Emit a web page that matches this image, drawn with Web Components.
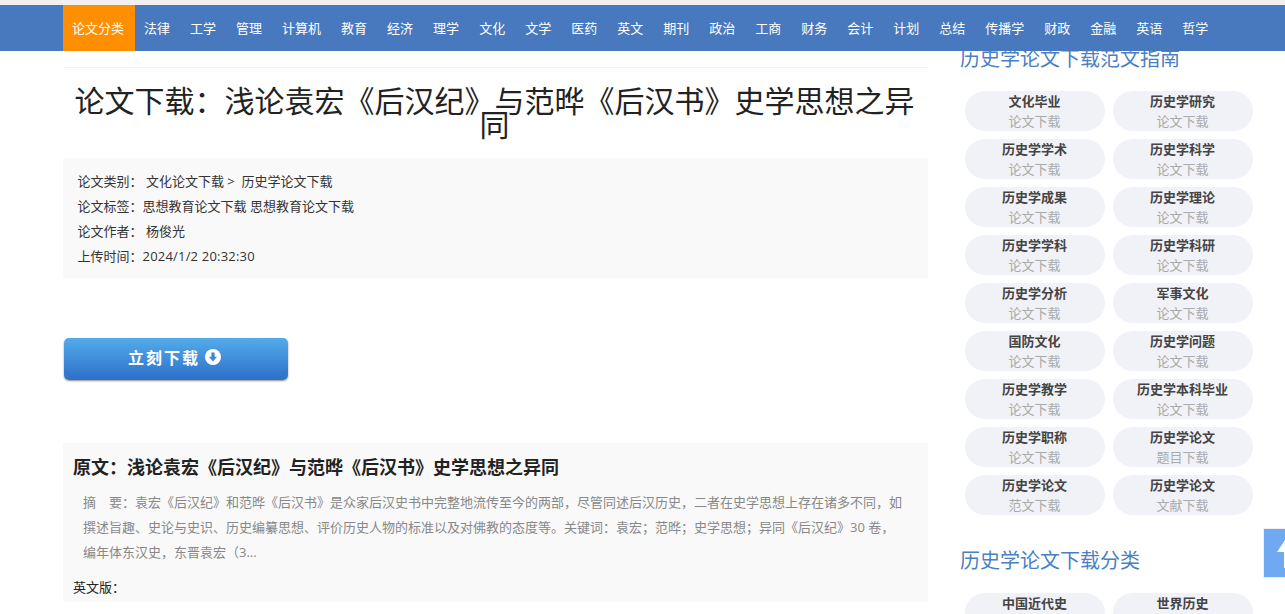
<!doctype html>
<html lang="zh">
<head>
<meta charset="utf-8">
<title>论文下载</title>
<style>
  html, body { margin: 0; padding: 0; overflow: hidden; height: 614px; background: #fff; }
  body { font-family: "Open Sans", "Noto Sans CJK SC", sans-serif; }
</style>
</head>
<body>

<template id="top-nav">
  <style>
    :host { display: block; position: fixed; top: 0; left: 0; right: 0; z-index: 5; border-top: 5px solid #f0f0f0; background: #4879be; }
    .bar { display: flex; height: 46px; padding-left: 63px; }
    a { display: block; padding: 0 11px 0 9px; font-size: 13px; line-height: 46px; color: #fff; white-space: nowrap; }
    a.on { background: #ff8f00; }
  </style>
  <div class="bar"></div>
</template>

<template id="paper-head">
  <style>
    :host { display: block; border-top: 1px solid #f3f3f3; }
    h1 { margin: 0; padding: 21px 2px 0 0; font-size: 30px; line-height: 24px; font-weight: 400; color: #222; text-align: center; }
  </style>
  <h1><slot></slot></h1>
</template>

<template id="info-box">
  <style>
    :host { display: block; margin-top: 21px; padding: 11px 15px 9px 14.5px; background: #f9f9f9; font-size: 13px; line-height: 25px; color: #333; }
  </style>
  <slot></slot>
</template>

<template id="download-button">
  <style>
    :host { display: block; width: 224px; height: 42px; margin: 60px 0 0 1px; border-radius: 5px; background: linear-gradient(#54abea, #2c70ca); box-shadow: 0 1px 2px rgba(0,0,0,.45); color: #fff; }
    .in { display: flex; align-items: center; justify-content: center; gap: 5px; height: 38px; padding-right: 3px; font-size: 16px; font-weight: 700; letter-spacing: 2px; }
    svg { width: 16px; height: 16px; display: block; }
  </style>
  <div class="in">
    <span><slot></slot></span>
    <svg viewBox="0 0 16 16"><circle cx="8" cy="8" r="8" fill="#fff"/><path d="M6.4 3.6h3.2v4.2h2.5L8 12.4 3.9 7.8h2.5z" fill="#3a86d8"/></svg>
  </div>
</template>

<template id="source-box">
  <style>
    :host { display: block; margin-top: 63px; padding: 12px 10px 2px; background: #f9f9f9; }
    h2 { margin: 0; font-size: 18px; line-height: 25px; font-weight: 700; color: #222; }
    .abs { margin: 10px 0 0; padding-left: 10px; font-size: 13px; line-height: 25px; color: #888; }
    .en { margin-top: 10px; font-size: 13px; line-height: 25px; color: #222; }
  </style>
  <h2><slot name="title"></slot></h2>
  <div class="abs"><slot name="abs"></slot></div>
  <div class="en"><slot name="en"></slot></div>
</template>

<template id="side-title">
  <style>
    :host { display: block; font-size: 20px; line-height: 30px; color: #4a7fc4; }
  </style>
  <slot></slot>
</template>

<template id="pill-grid">
  <style>
    :host { display: grid; grid-template-columns: 140px 140px; gap: 8px; padding-left: 5px; margin-top: 17px; }
  </style>
  <slot></slot>
</template>

<template id="pill-link">
  <style>
    :host { display: block; box-sizing: border-box; height: 40px; padding-right: 1px; border-radius: 20px; background: #f1f2f7; text-align: center; font-size: 13px; line-height: 20px; }
    b { display: block; font-weight: 700; color: #444; }
    span { display: block; color: #aaa; }
  </style>
  <b></b><span></span>
</template>

<template id="to-top">
  <style>
    :host { display: block; position: fixed; left: 1263px; top: 528px; box-sizing: border-box; width: 50px; height: 50px; background: #6fa9f1; border: 1px solid #eef0f3; }
    svg { display: block; width: 48px; height: 48px; }
  </style>
  <svg viewBox="0 0 48 48"><path d="M24 6.5 13 23h7v16h8V23h7z" fill="#fff"/></svg>
</template>

<div style="display:grid;grid-template-columns:865px 325px;column-gap:32px;padding:67px 0 0 63px;height:547px;overflow:hidden">
  <main>
    <paper-head>论文下载&#xFF1A;浅论袁宏《后汉纪》与范晔《后汉书》史学思想之异同</paper-head>
    <info-box>
      <div>论文类别&#xFF1A; 文化论文下载 &gt; &nbsp;历史学论文下载</div>
      <div>论文标签&#xFF1A;思想教育论文下载 思想教育论文下载</div>
      <div>论文作者&#xFF1A; 杨俊光</div>
      <div>上传时间&#xFF1A;<span style="letter-spacing:.2px">2024/1/2 20:32:30</span></div>
    </info-box>
    <download-button>立刻下载</download-button>
    <source-box>
      <span slot="title">原文&#xFF1A;浅论袁宏《后汉纪》与范晔《后汉书》史学思想之异同</span>
      <span slot="abs">摘&#x3000;要&#xFF1A;袁宏《后汉纪》和范晔《后汉书》是众家后汉史书中完整地流传至今的两部&#xFF0C;尽管同述后汉历史&#xFF0C;二者在史学思想上存在诸多不同&#xFF0C;如<br>撰述旨趣、史论与史识、历史编纂思想、评价历史人物的标准以及对佛教的态度等。关键词&#xFF1A;袁宏&#xFF1B;范晔&#xFF1B;史学思想&#xFF1B;异同《后汉纪》30 卷&#xFF0C;<br>编年体东汉史&#xFF0C;东晋袁宏&#xFF08;3...</span>
      <span slot="en">英文版&#xFF1A;</span>
    </source-box>
  </main>
  <aside style="margin-top:-23px">
    <side-title>历史学论文下载范文指南</side-title>
    <pill-grid id="guide"></pill-grid>
    <side-title style="margin-top:31px">历史学论文下载分类</side-title>
    <pill-grid id="cats"></pill-grid>
  </aside>
</div>

<top-nav></top-nav>
<to-top></to-top>

<script>
function plain(name, setup) {
  customElements.define(name, class extends HTMLElement {
    constructor() {
      super();
      var shadow = this.attachShadow({mode: 'open'});
      shadow.appendChild(document.getElementById(name).content.cloneNode(true));
      if (setup) setup.call(this, shadow);
    }
  });
}

var navItems = ['论文分类','法律','工学','管理','计算机','教育','经济','理学','文化','文学','医药','英文','期刊','政治','工商','财务','会计','计划','总结','传播学','财政','金融','英语','哲学'];

plain('top-nav', function(shadow) {
  var bar = shadow.querySelector('.bar');
  navItems.forEach(function(t, i) {
    var a = document.createElement('a');
    a.textContent = t;
    if (i == 0) a.className = 'on';
    bar.appendChild(a);
  });
});
plain('paper-head');
plain('info-box');
plain('download-button');
plain('source-box');
plain('side-title');
plain('pill-grid');
plain('to-top');
plain('pill-link');

function fill(id, rows) {
  var grid = document.getElementById(id);
  rows.forEach(function(r) {
    var p = document.createElement('pill-link');
    p.shadowRoot.querySelector('b').textContent = r[0];
    p.shadowRoot.querySelector('span').textContent = r[1];
    grid.appendChild(p);
  });
}
var d = '论文下载';
fill('guide', [['文化毕业',d],['历史学研究',d],['历史学学术',d],['历史学科学',d],['历史学成果',d],['历史学理论',d],['历史学学科',d],['历史学科研',d],['历史学分析',d],['军事文化',d],['国防文化',d],['历史学问题',d],['历史学教学',d],['历史学本科毕业',d],['历史学职称',d],['历史学论文','题目下载'],['历史学论文','范文下载'],['历史学论文','文献下载']]);
fill('cats', [['中国近代史',d],['世界历史',d]]);
</script>
</body>
</html>
